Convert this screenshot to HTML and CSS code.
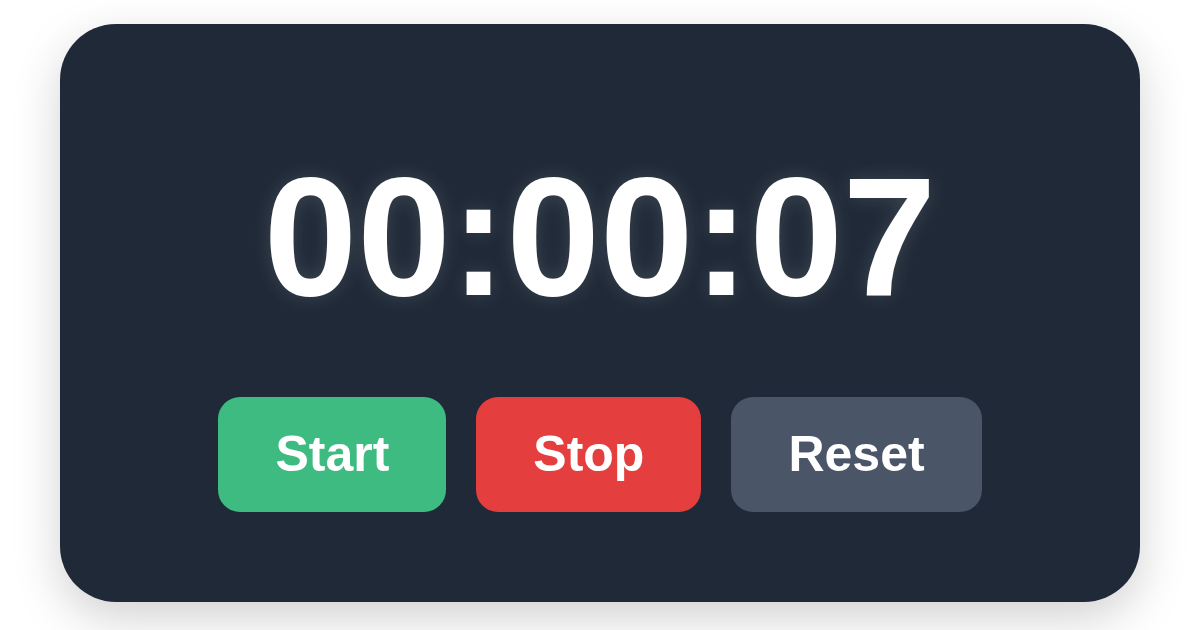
FILE: index.html
```html
<!DOCTYPE html>
<html lang="en">
<head>
<meta charset="utf-8">
<title>Stopwatch</title>
<link rel="stylesheet" href="styles.css">
</head>
<body>
<main class="card">
  <div class="timer">00:00:07</div>
  <div class="controls">
    <button class="btn btn-start">Start</button>
    <button class="btn btn-stop">Stop</button>
    <button class="btn btn-reset">Reset</button>
  </div>
</main>
</body>
</html>
```
FILE: styles.css
```css
html, body {
  margin: 0;
  padding: 0;
}
body {
  width: 1200px;
  height: 630px;
  background: #ffffff;
  font-family: "Liberation Sans", Arial, sans-serif;
  padding: 24px 60px 0;
  box-sizing: border-box;
  overflow: hidden;
}
.card {
  box-sizing: border-box;
  height: 578px;
  background: #1f2937;
  border-radius: 56px;
  box-shadow: 0 16px 48px rgba(0, 0, 0, 0.18);
  padding-top: 129px;
  display: flex;
  flex-direction: column;
  align-items: center;
}
.timer {
  color: #ffffff;
  font-weight: 700;
  font-size: 168px;
  line-height: 1;
  text-shadow: 0 0 20px rgba(255, 255, 255, 0.14);
}
.controls {
  margin-top: 76px;
  display: flex;
  gap: 30px;
}
.btn {
  border: none;
  border-radius: 22px;
  color: #ffffff;
  font-family: "Liberation Sans", Arial, sans-serif;
  font-weight: 700;
  font-size: 50px;
  line-height: 59px;
  padding: 28px 57px;
  cursor: pointer;
}
.btn-start { background: #3ebb80; }
.btn-stop { background: #e53e3e; }
.btn-reset { background: #4a5568; }
```
